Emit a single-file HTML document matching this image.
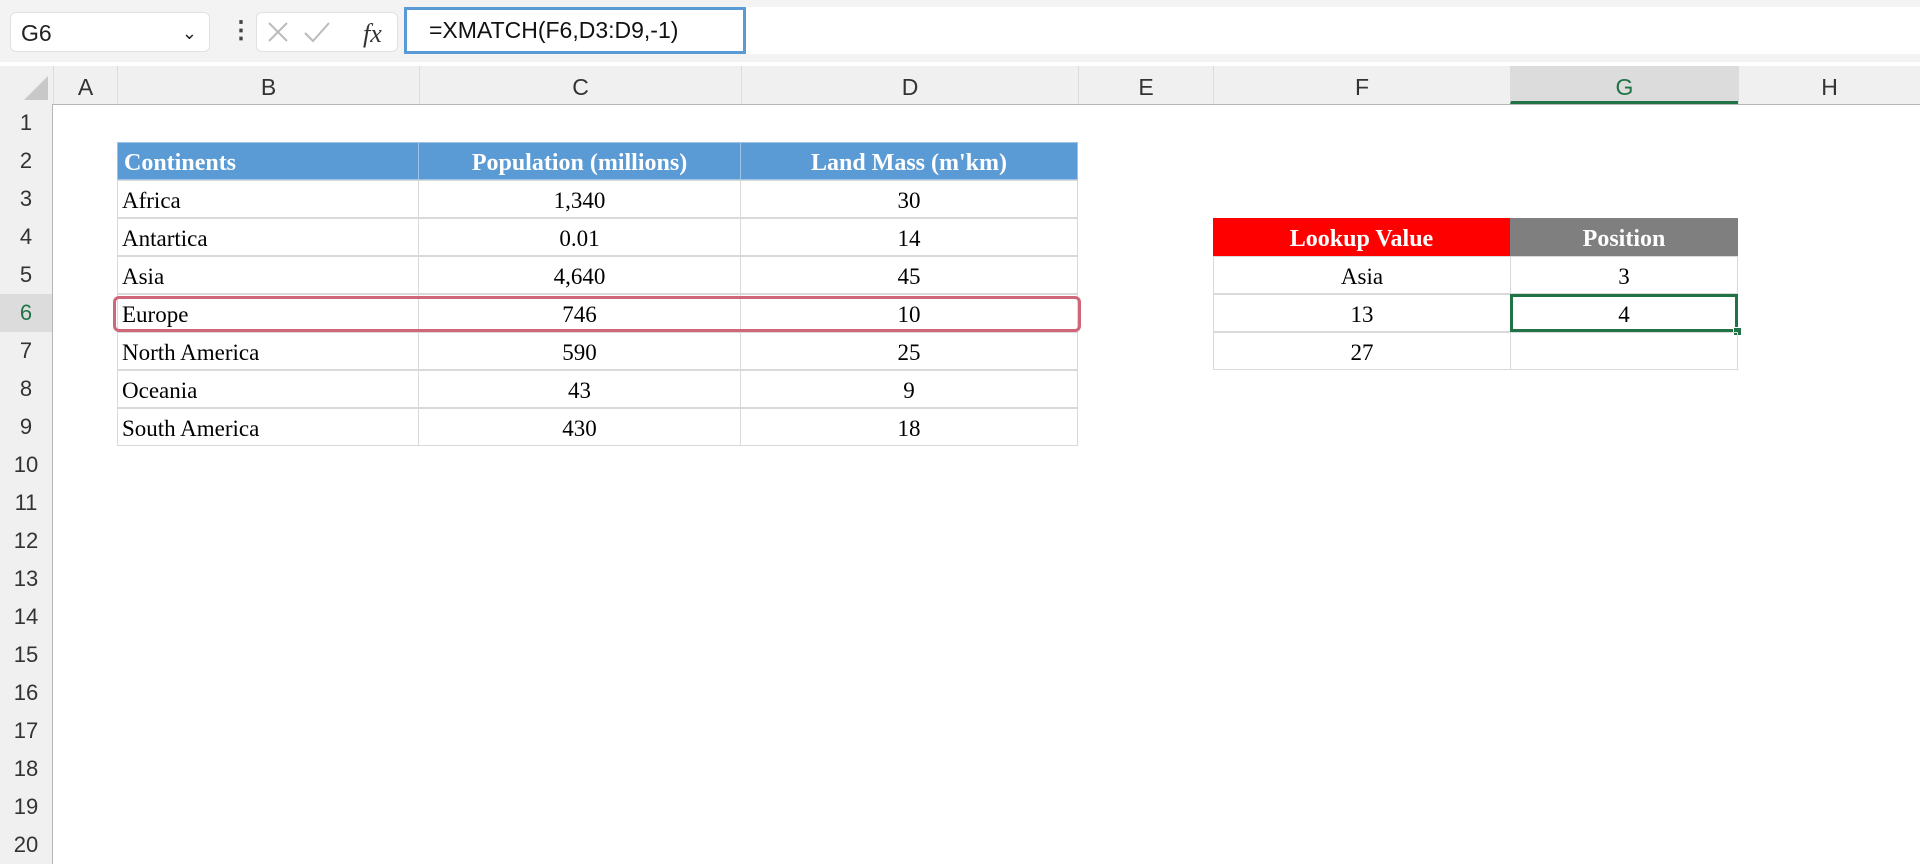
<!DOCTYPE html>
<html><head><style>
body{margin:0;width:1920px;height:864px;overflow:hidden;background:#fff;font-family:"Liberation Sans",sans-serif;position:relative}
.abs{position:absolute}
.top{left:0;top:0;width:1920px;height:62px;background:#f3f3f3}
.nb{left:10px;top:12px;width:200px;height:40px;background:#fff;border:1px solid #e1e1e1;border-radius:6px;font-size:23px;line-height:40px;box-sizing:border-box;padding-left:10px;color:#222}
.fx{left:256px;top:12px;width:142px;height:40px;background:#fff;border:1px solid #e1e1e1;border-radius:6px;box-sizing:border-box}
.fb{left:404px;top:7px;width:1516px;height:47px;background:#fff}
.fbox{left:404px;top:7px;width:342px;height:47px;border:3px solid #5b9bd5;box-sizing:border-box;font-size:23px;line-height:41px;padding-left:22px;color:#111}
.hdr{left:0;top:66px;width:1920px;height:38px;background:#f0f0f0;border-bottom:1px solid #b5b5b5}
.ch{position:absolute;top:66px;height:38px;line-height:42px;text-align:center;font-size:23px;color:#333;border-left:1px solid #dcdcdc;box-sizing:border-box}
.rh{position:absolute;left:0;width:53px;height:38px;line-height:38px;font-size:22px;color:#333;text-align:center;background:#f0f0f0;box-sizing:border-box;border-right:1px solid #b5b5b5}
.c{position:absolute;height:38px;line-height:40px;font-family:"Liberation Serif",serif;font-size:23px;color:#000;box-sizing:border-box;border:1px solid #d9d9d9;white-space:nowrap}
.h{color:#fff;font-weight:bold;font-size:24px;border-color:#9dc3e6}
.ctr{text-align:center}
</style></head><body>
<div class="abs top"></div>
<div class="abs nb">G6<span style="position:absolute;right:12px;top:0;font-size:18px">&#8964;</span></div>
<div class="abs" style="left:229px;top:18px;width:4px;height:28px;font-size:24px;line-height:26px;color:#444;font-weight:bold">&#8942;</div>
<div class="abs fx"><svg width="142" height="40"><path d="M12 10 L30 28 M30 10 L12 28" stroke="#bbb" stroke-width="2" fill="none"/><path d="M48 20 L56 28 L72 10" stroke="#bbb" stroke-width="2" fill="none"/><text x="106" y="29" font-family="Liberation Serif" font-style="italic" font-size="26" fill="#333">fx</text></svg></div>
<div class="abs fb"></div>
<div class="abs fbox">=XMATCH(F6,D3:D9,-1)</div>
<div class="abs hdr"></div>
<div class="abs" style="left:0;top:66px;width:53px;height:38px;background:#f0f0f0;border-right:1px solid #b5b5b5"><svg width="52" height="38"><path d="M48 10 L48 34 L24 34 Z" fill="#c8c8c8"/></svg></div>
<div class="ch" style="left:53px;width:64px">A</div>
<div class="ch" style="left:117px;width:302px">B</div>
<div class="ch" style="left:419px;width:322px">C</div>
<div class="ch" style="left:741px;width:337px">D</div>
<div class="ch" style="left:1078px;width:135px">E</div>
<div class="ch" style="left:1213px;width:297px">F</div>
<div class="ch" style="left:1510px;width:228px;background:#dcdcdc;border-bottom:3px solid #217346;color:#217346">G</div>
<div class="ch" style="left:1738px;width:182px">H</div>
<div id="rows"></div>
<script>
var r=document.getElementById('rows'),s='';
for(var i=1;i<=20;i++){var y=104+(i-1)*38;s+='<div class="rh" style="top:'+y+'px;'+(i==6?'background:#dcdcdc;color:#217346;':'')+'">'+i+'</div>';}
r.innerHTML=s;
</script>
<div class="c h" style="left:117px;top:142px;width:302px;background:#5b9bd5;padding-left:6px">Continents</div>
<div class="c h ctr" style="left:418px;top:142px;width:323px;background:#5b9bd5">Population (millions)</div>
<div class="c h ctr" style="left:740px;top:142px;width:338px;background:#5b9bd5">Land Mass (m'km)</div>
<div id="t"></div>
<script>
var d=[["Africa","1,340","30"],["Antartica","0.01","14"],["Asia","4,640","45"],["Europe","746","10"],["North America","590","25"],["Oceania","43","9"],["South America","430","18"]],h='';
d.forEach(function(x,k){var y=180+k*38;h+='<div class="c" style="left:117px;top:'+y+'px;width:302px;padding-left:4px">'+x[0]+'</div><div class="c ctr" style="left:418px;top:'+y+'px;width:323px">'+x[1]+'</div><div class="c ctr" style="left:740px;top:'+y+'px;width:338px">'+x[2]+'</div>';});
document.getElementById('t').innerHTML=h;
</script>
<div class="abs" style="left:113px;top:296px;width:968px;height:36px;border:3px solid #d0667a;border-radius:6px;box-sizing:border-box"></div>
<div class="c h ctr" style="left:1213px;top:218px;width:297px;background:#f00;border-color:#f00">Lookup Value</div>
<div class="c h ctr" style="left:1510px;top:218px;width:228px;background:#7f7f7f;border-color:#7f7f7f">Position</div>
<div class="c ctr" style="left:1213px;top:256px;width:298px">Asia</div>
<div class="c ctr" style="left:1510px;top:256px;width:228px">3</div>
<div class="c ctr" style="left:1213px;top:294px;width:298px">13</div>
<div class="c ctr" style="left:1510px;top:294px;width:228px;border:3px solid #217346;line-height:36px">4</div>
<div class="abs" style="left:1733px;top:327px;width:7px;height:7px;background:#217346;border:1px solid #fff"></div>
<div class="c ctr" style="left:1213px;top:332px;width:298px">27</div>
<div class="c ctr" style="left:1510px;top:332px;width:228px"></div>
</body></html>
